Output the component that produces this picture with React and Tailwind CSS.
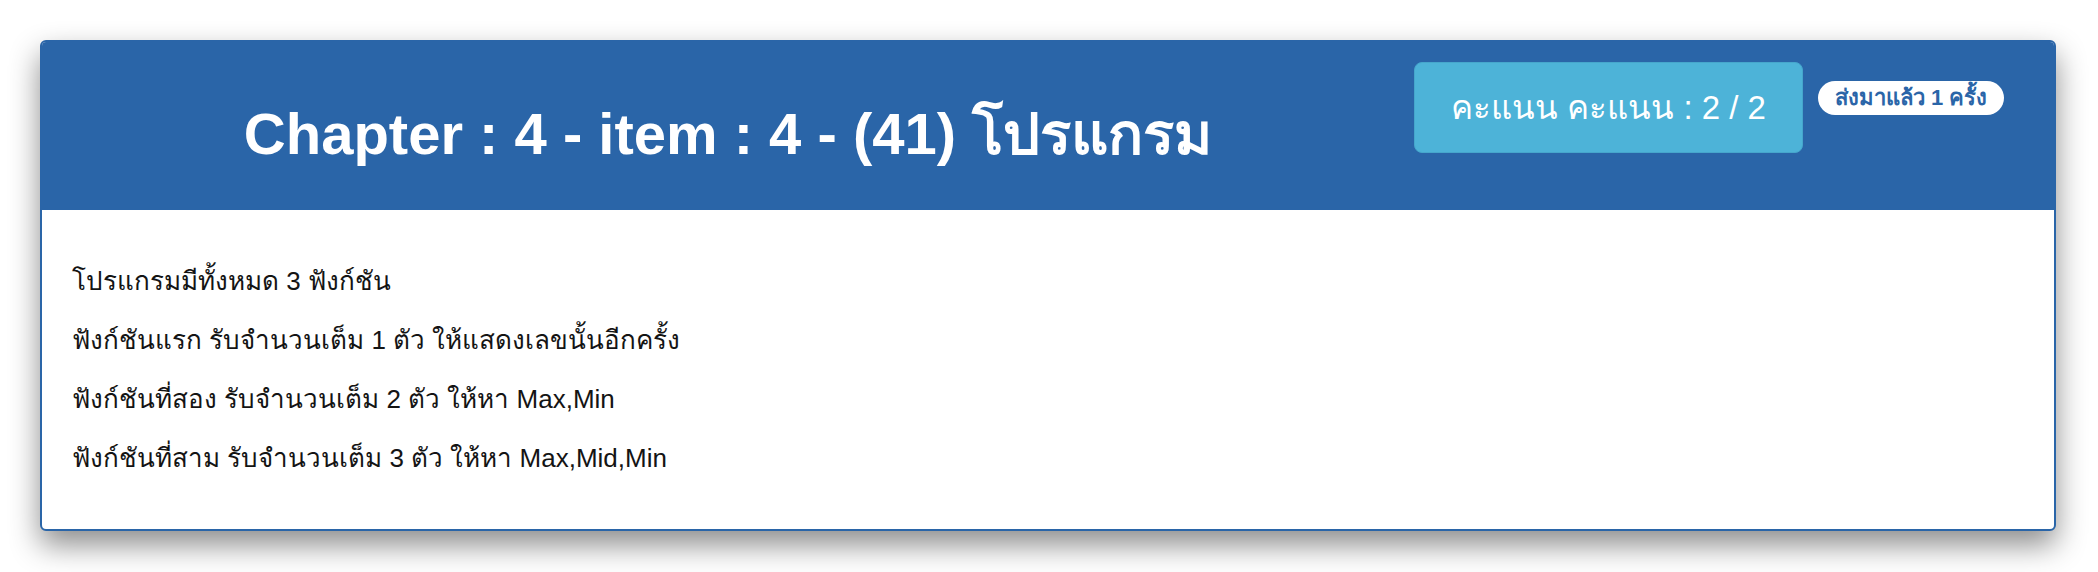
const lines = [
  'โปรแกรมมีทั้งหมด 3 ฟังก์ชัน',
  'ฟังก์ชันแรก รับจำนวนเต็ม 1 ตัว ให้แสดงเลขนั้นอีกครั้ง',
  'ฟังก์ชันที่สอง รับจำนวนเต็ม 2 ตัว ให้หา Max,Min',
  'ฟังก์ชันที่สาม รับจำนวนเต็ม 3 ตัว ให้หา Max,Mid,Min',
];

export default function App() {
  return (
    <div className="min-h-[572px] bg-white pt-[40px] pl-[40px] pr-[42px] pb-[41px] font-['Liberation_Sans','Noto_Sans',sans-serif]">
      <div className="rounded-[6px] border-2 border-[#2a65a8] bg-white overflow-hidden shadow-[0_14px_30px_rgba(0,0,0,0.45)]">
        {/* Header */}
        <div className="flex items-start h-[168px] bg-[#2a65a8]">
          <div className="flex-1 mt-[59px] text-center">
            <h2 className="text-[58px] leading-[66px] font-bold text-white">
              Chapter : 4 - item : 4 - (41) โปรแกรม
            </h2>
          </div>
          <div className="mt-[20px] flex items-center justify-center w-[389px] h-[91px] rounded-[8px] border border-[#46a6cc] bg-[#4db3d8] text-[33px] text-white">
            คะแนน คะแนน : 2 / 2
          </div>
          <div className="ml-[15px] mt-[39px] mr-[50px] flex items-center justify-center w-[186px] h-[34px] rounded-full bg-white text-[22px] leading-none font-bold text-[#2a65a8]">
            ส่งมาแล้ว 1 ครั้ง
          </div>
        </div>

        {/* Body */}
        <div className="pl-[30px] pt-[42px] pb-[41px] text-[#141414]">
          {lines.map(l => (
            <p key={l} className="text-[26px] leading-[59px]">{l}</p>
          ))}
        </div>
      </div>
    </div>
  );
}
